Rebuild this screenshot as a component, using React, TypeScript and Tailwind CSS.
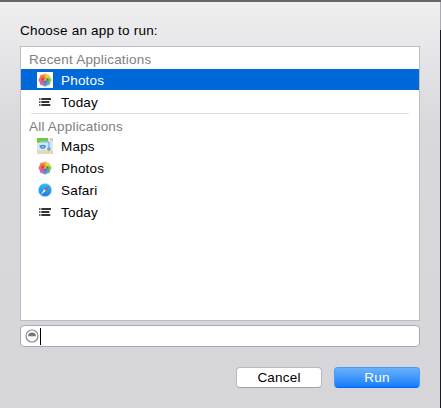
import React from 'react';

const petals = [
  ['#fba21c', 0], ['#dcd42a', 45], ['#80bf3c', 90], ['#4fae92', 135],
  ['#5b84cb', 180], ['#a266b2', 225], ['#e2527c', 270], ['#f4663a', 315],
] as const;

function PhotosIcon({ boxed = false }: { boxed?: boolean }) {
  return (
    <svg width="16" height="16" viewBox="0 0 16 16">
      {boxed && <rect width="16" height="16" fill="#fff" />}
      {petals.map(([color, angle]) => (
        <rect key={angle} x="5.7" y="1.5" width="4.6" height="6" rx="2.2" fill={color} fillOpacity=".86" transform={`rotate(${angle} 8 8)`} />
      ))}
      <path d="M7.6 8 4.4 7.6 5.4 5.2Z" fill="#dc2f22" />
      <path d="m8.6 7.8 2.6-1.2.2 2.4Z" fill="#2a8f4c" />
      <path d="m7.6 8.6 1.6.4-.8 2.2Z" fill="#5b4a98" />
      <circle cx="8" cy="8" r=".7" fill="#f0c890" />
    </svg>
  );
}

function TodayIcon() {
  return (
    <svg width="16" height="16" viewBox="0 0 16 16" fill="#333">
      <path d="M2 4.2h1.5v1.6H2zM4.3 4H14v2H4.3zM2 7.2h1.5v1.6H2zM4.3 7h8v2h-8zM2 10.2h1.5v1.6H2zM4.3 10h9v2h-9z" />
    </svg>
  );
}

function MapsIcon() {
  return (
    <svg width="16" height="16" viewBox="0 0 16 16">
      <path d="M0 0h16v16H0z" fill="#f1e8d2" />
      <path d="M0 0h11v3L0 5z" fill="#74c83b" />
      <path d="M13 0h3v3h-3zM14 13h2v3h-2z" fill="#f6bdc5" />
      <path d="M0 6 7 4h9v2l-3 7-13-2z" fill="#d3e8f5" />
      <path d="M0 12h9l3 4H0z" fill="#e2d9c4" />
      <path d="M10 13h3v3h-3z" fill="#f6df57" />
      <path d="M4 3.6h6q2 0 2 2v5" fill="none" stroke="#84bdf6" strokeWidth="1.6" />
      <circle cx="12" cy="11" r="1.9" fill="#64a8f2" />
      <path d="M2.5 7.4q3-1.4 6.5 0Q9 10 5.7 11 2.5 10 2.5 7.4" fill="#498edb" />
      <path d="M4.1 8.4h3.3L5.7 9.4z" fill="#e8f4fc" />
    </svg>
  );
}

function SafariIcon() {
  return (
    <svg width="16" height="16" viewBox="0 0 16 16">
      <defs><linearGradient id="compass" x2="0" y2="1"><stop stopColor="#23c5f8" /><stop offset="1" stopColor="#2277e9" /></linearGradient></defs>
      <circle cx="8" cy="8" r="6.6" fill="url(#compass)" stroke="#b4d9ef" strokeWidth=".5" />
      <path d="m12.4 3.4-3.6 5.4-1.6-1.5z" fill="#ef4035" />
      <path d="m7.2 7.3 1.6 1.5-5.2 3.9z" fill="#f4faff" />
    </svg>
  );
}

function Row({ icon, label }: { icon: React.ReactNode; label: string }) {
  return (
    <div className="flex h-[22px] items-center pl-4">
      {icon}
      <span className="ml-2 pt-px leading-[21px]">{label}</span>
    </div>
  );
}

export default function App() {
  return (
    <div className="flex h-[408px] w-[441px] font-['Liberation_Sans',Arial,sans-serif] text-[13.5px] tracking-[0.2px] text-black">
      <main className="flex w-[440px] flex-col border-t-2 border-[#69676b] bg-linear-to-b from-[#efeff0] via-[#d9d8dc] via-30% to-[#d6d5da] pr-5 pl-5">
        <h1 className="mt-[18px] h-[26px] leading-[22px]">Choose an app to run:</h1>
        <section className="h-[275px] w-[400px] shrink-0 border border-[#bdbcc0] bg-white">
          <h2 className="h-[22px] pl-2 leading-[26px] text-[#808080]">Recent Applications</h2>
          <div className="flex h-[21px] items-center bg-[#0069d9] pl-4 text-white">
            <PhotosIcon boxed />
            <span className="ml-2 pt-0.5 leading-[20px]">Photos</span>
          </div>
          <div className="pt-px">
            <Row icon={<TodayIcon />} label="Today" />
          </div>
          <hr className="mr-[10px] ml-[10px] border-[#dedede]" />
          <h2 className="h-[21px] pl-2 leading-[25px] text-[#808080]">All Applications</h2>
          <Row icon={<MapsIcon />} label="Maps" />
          <Row icon={<PhotosIcon />} label="Photos" />
          <Row icon={<SafariIcon />} label="Safari" />
          <Row icon={<TodayIcon />} label="Today" />
        </section>
        <div className="mt-1 flex h-[22px] w-[400px] shrink-0 items-center rounded-[4px] border border-[#a9a9ac] bg-white pl-1">
          <svg width="14" height="14" viewBox="0 0 14 14">
            <circle cx="7" cy="7" r="6" fill="#fff" stroke="#8b8b8b" strokeWidth="1.2" />
            <path d="M3 7.2a4 3.8 0 0 1 8 0z" fill="#777" />
          </svg>
          <span className="ml-[1px] h-[17px] w-px bg-black" />
        </div>
        <footer className="mt-5 flex justify-end gap-3">
          <button className="h-[21px] w-[86px] rounded-[4px] border border-[#b9b8bd] border-b-[#a2a1a6] bg-white leading-[19px]">Cancel</button>
          <button className="h-[21px] w-[86px] rounded-[4px] border border-[#469bf6] border-b-[#0868ed] bg-linear-to-b from-[#69b1fa] to-[#087dfd] leading-[19px] text-white">Run</button>
        </footer>
      </main>
      <aside className="w-px border-t-2 border-[#69676b] bg-[#1b1b24]"><div className="h-7 bg-[#aaa9ad]" /></aside>
    </div>
  );
}
